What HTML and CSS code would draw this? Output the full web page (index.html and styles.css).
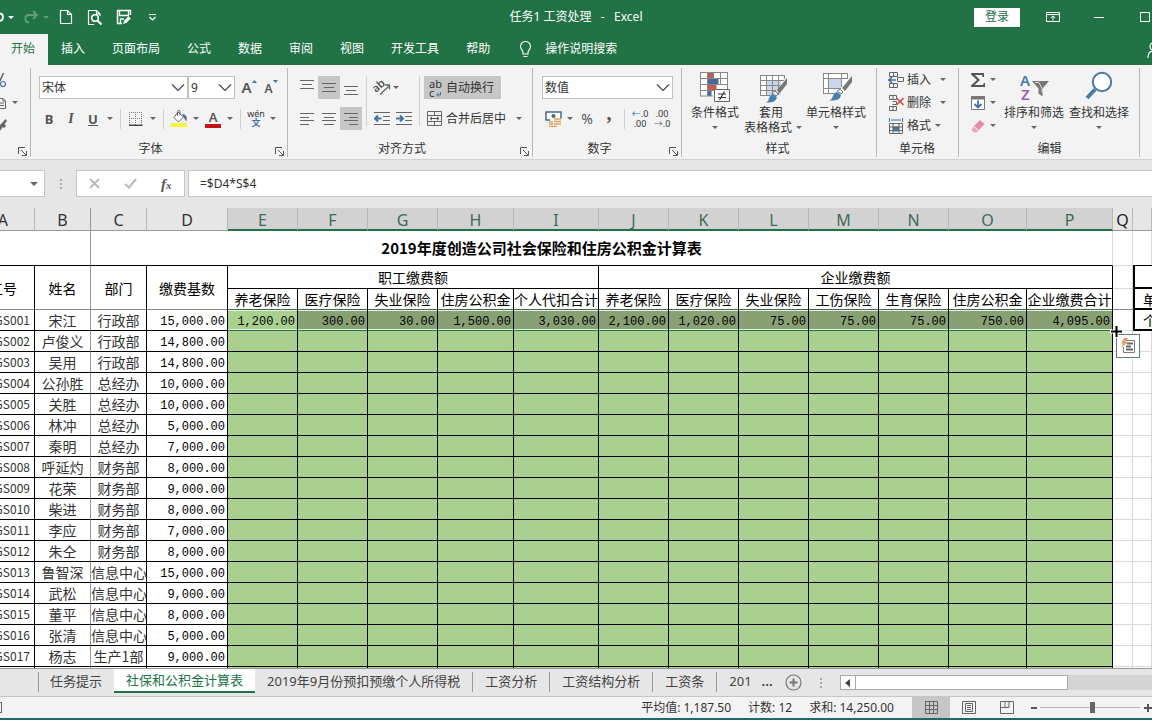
FILE: index.html
```html
<!DOCTYPE html>
<html lang="zh-CN">
<head>
<meta charset="utf-8">
<title>任务1 工资处理 - Excel</title>
<link rel="stylesheet" href="styles.css">
</head>
<body>
<header class="titlebar">
  <div class="quick">
    <button class="q-undo" aria-label="撤消"><svg width="4" height="16" viewBox="0 0 4 16"><path d="M0 4.500C4 5 4 11 0 12" fill="none" stroke="#fff" stroke-width="1.800"/></svg><i class="caret"></i></button>
    <button class="q-redo" aria-label="恢复"><svg width="16" height="16" viewBox="0 0 16 16" fill="none" stroke="#fff" stroke-width="1.800"><path d="M14 6H6.500C1 6 1 13 6 13.500M10 2l4 4-4 4"/></svg><i class="caret"></i></button>
    <button class="q-btn" aria-label="新建"><svg width="14" height="16" viewBox="0 0 14 16" fill="none" stroke="#fff" stroke-width="1.200"><path d="M1.500 1.500h7l4 4v9h-11zM8.500 1.500v4h4"/></svg></button>
    <button class="q-btn" aria-label="打印预览"><svg width="16" height="17" viewBox="0 0 16 17" fill="none" stroke="#fff" stroke-width="1.200"><path d="M7 15.500H1.500v-14h8l3.500 3.500v2M9.500 1.500V5h3"/><circle cx="8" cy="9" r="3.300" stroke-width="1.600"/><path d="M10.500 11.500l4 4" stroke-width="2.200"/></svg></button>
    <button class="q-btn" aria-label="保存"><svg width="16" height="16" viewBox="0 0 16 16" fill="none" stroke="#fff" stroke-width="1.400"><path d="M6 14.500H1.500v-13h13V6M3.500 2v4.500h9V2M4.500 14v-4H8"/><path d="M7.500 14.500l1-3 4-4 2 2-4 4z" fill="#fff" stroke-width=".6"/></svg></button>
    <button class="q-btn" aria-label="自定义快速访问工具栏"><svg width="9" height="9" viewBox="0 0 9 9" fill="none" stroke="#fff" stroke-width="1.200"><path d="M1 1.500h7M1.500 4l3 3 3-3"/></svg></button>
  </div>
  <h1 class="doc-title">任务1 工资处理&nbsp;&nbsp; -&nbsp;&nbsp; Excel</h1>
  <div class="win">
    <button class="signin">登录</button>
    <button class="win-btn" aria-label="功能区显示选项"><svg width="14" height="12" viewBox="0 0 14 12" fill="none" stroke="#fff"><path d="M.5 1.500h13v9H.5zM.5 3.500h13M7 9.500V5M4.800 7L7 4.800 9.200 7"/></svg></button>
    <button class="win-btn" aria-label="最小化"><svg width="10" height="10" viewBox="0 0 10 10" stroke="#fff"><path d="M0 5.500h10"/></svg></button>
    <button class="win-btn" aria-label="最大化"><svg width="10" height="10" viewBox="0 0 10 10" fill="none" stroke="#fff"><path d="M.5.5h9v9h-9z"/></svg></button>
  </div>
</header>
<nav class="tabs">
  <a href="#" class="tab tab-on">开始</a><a href="#" class="tab">插入</a><a href="#" class="tab">页面布局</a><a href="#" class="tab">公式</a><a href="#" class="tab">数据</a><a href="#" class="tab">审阅</a><a href="#" class="tab">视图</a><a href="#" class="tab">开发工具</a><a href="#" class="tab">帮助</a>
  <a href="#" class="tell"><svg width="13" height="17" viewBox="0 0 13 17" fill="none" stroke="#fff" stroke-width="1.100"><path d="M4 11.500C4 9 1.500 8.500 1.500 5.500a5 5 0 0 1 10 0C11.500 8.500 9 9 9 11.500v1.500H4zM4.500 15.500h4"/></svg>操作说明搜索</a>
  <button class="share" aria-label="共享"><svg width="14" height="18" viewBox="0 0 14 18" fill="none" stroke="#fff" stroke-width="1.200"><circle cx="7" cy="5.500" r="4"/><path d="M1 17c0-5 2.500-7 6-7s6 2 6 7"/></svg></button>
</nav>

<section class="ribbon">
  <div class="group g-clip">
    <div class="clip">
      <button class="tool" aria-label="剪切"><svg width="7" height="16" viewBox="0 0 7 16" fill="none"><path d="M3.500 1L0 9" stroke="#666" stroke-width="1.600"/><circle cx="3" cy="12" r="2.500" stroke="#4472a8" stroke-width="1.200"/></svg></button>
      <button class="tool" aria-label="复制"><svg width="7" height="14" viewBox="0 0 7 14" fill="none" stroke="#666"><path d="M0 2.500h3l2.500 2.500v7.500H0M0 7h4M0 9.500h4M3 2.500V5h2.500"/></svg><i class="caret"></i></button>
      <button class="tool" aria-label="格式刷"><svg width="7" height="14" viewBox="0 0 7 14"><path d="M5.500 0L7 2 4.500 5 6 7 4 9 2.500 8 0 12V6l2-2z" fill="#666"/></svg></button>
    </div>
    <div class="glabel"><button class="launch" aria-label="剪贴板设置"><svg width="9" height="9" viewBox="0 0 9 9" fill="none" stroke="#555"><path d="M.5 7V.5H7M3 3l5 5M8.500 4v4.500H4"/></svg></button></div>
  </div>

  <div class="group g-font">
    <div class="row">
      <label class="combo c-font"><select aria-label="字体"><option>宋体</option></select><svg width="14" height="9" viewBox="0 0 14 9" fill="none" stroke="#444" stroke-width="1.200"><path d="M1 1.500l6 6 6-6"/></svg></label>
      <label class="combo c-size"><select aria-label="字号"><option>9</option></select><svg width="14" height="9" viewBox="0 0 14 9" fill="none" stroke="#444" stroke-width="1.200"><path d="M1 1.500l6 6 6-6"/></svg></label>
      <button class="tool grow" aria-label="增大字号"><b class="big-a">A</b><svg width="5" height="3" viewBox="0 0 5 3"><path d="M0 3l2.500-3L5 3z" fill="#4472a8"/></svg></button>
      <button class="tool grow" aria-label="减小字号"><b class="small-a">A</b><svg width="5" height="3" viewBox="0 0 5 3"><path d="M0 0l2.500 3L5 0z" fill="#4472a8"/></svg></button>
    </div>
    <div class="row row-fmt">
      <button class="tool"><b>B</b></button><button class="tool"><b class="ital">I</b></button><button class="tool"><b class="under">U</b></button><button class="drop" aria-label="下划线样式"><i class="caret"></i></button>
      <i class="sep"></i>
      <button class="tool" aria-label="边框"><svg width="14" height="14" viewBox="0 0 14 14" fill="none" stroke="#777"><path d="M.5 0v13M6.500 0v13M12.500 0v13M0 .5h13M0 6.500h13" stroke-dasharray="1 1"/><path d="M0 13.300h13.500" stroke="#444" stroke-width="1.400"/></svg></button><button class="drop" aria-label="边框选项"><i class="caret"></i></button>
      <i class="sep"></i>
      <button class="tool" aria-label="填充颜色"><svg width="17" height="17" viewBox="0 0 17 17"><path d="M7 2l5.500 5L7.500 12 3 7.500z" fill="#fff" stroke="#666"/><path d="M6.500 6V1.500c0-1.500 2.500-1.500 2.500 0V5" fill="none" stroke="#666"/><path d="M11 4c4 0 5.500 3 4.500 7.500L13 8z" fill="#4f6f9b"/><path d="M0 13h16v4H0z" fill="#f5f53c"/></svg></button><button class="drop" aria-label="填充颜色选项"><i class="caret"></i></button>
      <button class="tool font-color" aria-label="字体颜色"><b>A</b><i></i></button><button class="drop" aria-label="字体颜色选项"><i class="caret"></i></button>
      <i class="sep"></i>
      <button class="tool pinyin" aria-label="拼音"><span>wén</span><b>文</b></button><button class="drop" aria-label="拼音选项"><i class="caret"></i></button>
    </div>
    <div class="glabel"><span>字体</span><button class="launch" aria-label="字体设置"><svg width="9" height="9" viewBox="0 0 9 9" fill="none" stroke="#555"><path d="M.5 7V.5H7M3 3l5 5M8.500 4v4.500H4"/></svg></button></div>
  </div>

  <div class="group g-align">
    <div class="cols">
      <div class="pad p3">
        <button class="tool" aria-label="顶端对齐"><svg width="14" height="15" viewBox="0 0 14 15" stroke="#666"><path d="M0 .5h14M2 4.500h10M0 8.500h14"/></svg></button>
        <button class="tool on" aria-label="垂直居中"><svg width="14" height="15" viewBox="0 0 14 15" stroke="#666"><path d="M0 3.500h14M2 7.500h10M0 11.500h14"/></svg></button>
        <button class="tool" aria-label="底端对齐"><svg width="14" height="15" viewBox="0 0 14 15" stroke="#666"><path d="M0 6.500h14M2 10.500h10M0 14.500h14"/></svg></button>
        <button class="tool" aria-label="左对齐"><svg width="14" height="12" viewBox="0 0 14 12" stroke="#666"><path d="M0 .5h14M0 4.500h9M0 7.500h14M0 11.500h9"/></svg></button>
        <button class="tool" aria-label="居中"><svg width="14" height="12" viewBox="0 0 14 12" stroke="#666"><path d="M0 .5h14M2 4.500h10M0 7.500h14M2 11.500h10"/></svg></button>
        <button class="tool on" aria-label="右对齐"><svg width="14" height="12" viewBox="0 0 14 12" stroke="#666"><path d="M0 .5h14M5 4.500h9M0 7.500h14M5 11.500h9"/></svg></button>
      </div>
      <i class="sep"></i>
      <div class="pad p2">
        <button class="tool" aria-label="方向"><svg width="18" height="17" viewBox="0 0 18 17"><text x="0" y="12" font-family="Noto Sans" font-size="11" font-weight="500" fill="#444" transform="rotate(-42 4 9)">ab</text><path d="M7 15.500L16 7M12 6h4.500v4.500" fill="none" stroke="#666" stroke-width="1.300"/></svg></button>
        <button class="drop left" aria-label="方向选项"><i class="caret"></i></button>
        <button class="tool" aria-label="减少缩进"><svg width="16" height="13" viewBox="0 0 16 13"><path d="M0 .5h16M9 4.500h7M9 8.500h7M0 12.500h16" stroke="#666"/><path d="M7.500 6.500H1.500M4 3.500l-3 3 3 3" fill="none" stroke="#4472a8" stroke-width="2"/></svg></button>
        <button class="tool" aria-label="增加缩进"><svg width="16" height="13" viewBox="0 0 16 13"><path d="M0 .5h16M9 4.500h7M9 8.500h7M0 12.500h16" stroke="#666"/><path d="M0 6.500h6M4 3.500l3 3-3 3" fill="none" stroke="#4472a8" stroke-width="2"/></svg></button>
      </div>
      <i class="sep"></i>
      <div class="stack">
        <button class="wide on"><span class="wrap-ic">ab<br>c<svg width="5" height="5" viewBox="0 0 5 5" fill="none" stroke="#4472a8"><path d="M4.500 0v3H1M2.500 1L.8 3l1.700 1.700"/></svg></span>自动换行</button>
        <button class="wide"><span class="ic22"><svg width="15" height="15" viewBox="0 0 15 15" fill="none" stroke="#666"><path d="M.5.500h14v14H.5zM.5 4.500h14M.5 10.500h14M7.500.5v4M7.500 10.500v4"/><path d="M3 7.500h9M5 5.800L3 7.500l2 1.700M10 5.800l2 1.700-2 1.700" stroke="#555"/></svg></span>合并后居中<i class="caret far"></i></button>
      </div>
    </div>
    <div class="glabel"><span>对齐方式</span><button class="launch" aria-label="对齐设置"><svg width="9" height="9" viewBox="0 0 9 9" fill="none" stroke="#555"><path d="M.5 7V.5H7M3 3l5 5M8.500 4v4.500H4"/></svg></button></div>
  </div>

  <div class="group g-num">
    <div class="row">
      <label class="combo c-num"><select aria-label="数字格式"><option>数值</option></select><svg width="14" height="9" viewBox="0 0 14 9" fill="none" stroke="#444" stroke-width="1.200"><path d="M1 1.500l6 6 6-6"/></svg></label>
    </div>
    <div class="row row-fmt">
      <button class="tool" aria-label="会计数字格式"><svg width="17" height="17" viewBox="0 0 17 17"><path d="M1 2h15v8H1z" fill="#fff" stroke="#456b8c" stroke-width="1.500"/><circle cx="8.500" cy="6" r="2" fill="#456b8c"/><path d="M5 8.500h12V17H5z" fill="#f3f3f3"/><path d="M9 9h7M9 11.500h7M9 14h7M4 12h4M4 14h4M4 16.300h8" stroke="#dfa35c" stroke-width="1.300"/></svg></button><button class="drop" aria-label="会计选项"><i class="caret"></i></button>
      <button class="tool pct">%</button><button class="tool comma">,</button>
      <i class="sep"></i>
      <button class="tool dec" aria-label="增加小数位数"><span><em>←</em>.0</span><span>.00</span></button><button class="tool dec" aria-label="减少小数位数"><span>.00</span><span><em>→</em>.0</span></button>
    </div>
    <div class="glabel"><span>数字</span><button class="launch" aria-label="数字设置"><svg width="9" height="9" viewBox="0 0 9 9" fill="none" stroke="#555"><path d="M.5 7V.5H7M3 3l5 5M8.500 4v4.500H4"/></svg></button></div>
  </div>

  <div class="group g-style">
    <div class="bigs">
      <button class="big b52"><svg width="32" height="32" viewBox="0 0 32 32"><path d="M1 1h28v24H1z" fill="#fff"/><path d="M8.500 1h6v6h-6zM8.500 13h9v6h-9z" fill="#c25b50"/><path d="M8.500 7h11v6h-11zM8.500 19h4v6h-4z" fill="#466a9c"/><path d="M1.500 1v24M8.500 1v24M14.500 1v6M21.500 1v12M28.500 1v18M1 1.500h28M1 7.500h28M1 13.500h28M1 19.500h14M1 25h13" stroke="#888" fill="none"/><path d="M15.500 18.500h15v12h-15z" fill="#fff" stroke="#666"/><path d="M19 23h8M19 26.500h8M25.500 20.500l-5 8.500" stroke="#333" stroke-width="1.200"/></svg><span>条件格式</span><i class="caret"></i></button>
      <button class="big b60"><svg width="32" height="32" viewBox="0 0 32 32"><path d="M5 4h22v20H5z" fill="#fff"/><path d="M11 9h15v15H11z" fill="#ccd6ea"/><path d="M5.500 4v20M11.500 4v20M17.500 4v20M23.500 4v20M5 4.500h24M5 9.500h24M5 14.500h20M5 19.500h16M5 24.500h10M29.500 4v4" stroke="#888" fill="none"/><path d="M32 7v6l-7 9-3-3z" fill="#777"/><path d="M20 20l3 3-2 2-4-3z" fill="#fff" stroke="#777"/><path d="M11 31.500c4-1 2-8 7-8.500l4 3c-1 5-6 6-11 5.500z" fill="#4a80b0"/></svg><span>套用</span><span class="line2">表格格式<i class="caret"></i></span></button>
      <button class="big b70"><svg width="32" height="32" viewBox="0 0 32 32"><path d="M3 2h24v20H3z" fill="#fff"/><path d="M9 8h12v9H9z" fill="#ccd6ea"/><path d="M3.500 2v20M8.500 2v20M21.500 2v14M27.500 2v5M3 2.500h25M3 7.500h25M3 17.500h18M3 22.500h12" stroke="#888" fill="none"/><path d="M32 5v6l-7 9-3-3z" fill="#777"/><path d="M20 18l3 3-2 2-4-3z" fill="#fff" stroke="#777"/><path d="M9 29.500c5-1 3-8 8-8.500l4 3c-1 5-6 6-12 5.500z" fill="#4a80b0"/></svg><span>单元格样式</span><i class="caret"></i></button>
    </div>
    <div class="glabel"><span>样式</span></div>
  </div>

  <div class="group g-cell">
    <div class="minis">
      <button class="mini"><svg width="16" height="16" viewBox="0 0 16 16" fill="none" stroke="#666"><path d="M1.500.5h8v4h-8zM5.500.5v4M1.500 11.500h8v4h-8zM5.500 11.500v4M9.500 5.500h6v4h-6z"/><path d="M8 8H1M4 5L1 8l3 3" stroke="#4472a8" stroke-width="1.600"/></svg>插入<i class="caret c12"></i></button>
      <button class="mini"><svg width="16" height="16" viewBox="0 0 16 16" fill="none" stroke="#666"><path d="M1.500.5h7v4h-7zM5 .5v4M1.500 11.500h7v4h-7zM5 11.500v4M4.500 6.500h4v3h-4"/><path d="M8.500 3l7 7M15.500 3l-7 7" stroke="#c8534d" stroke-width="1.700"/></svg>删除<i class="caret c12"></i></button>
      <button class="mini"><svg width="16" height="16" viewBox="0 0 16 16" fill="none" stroke="#666"><path d="M1.500 5.500h13v10h-13zM5 5.500v10M11 5.500v10M1.500 9h13M1.500 12.500h13"/><path d="M5.500 9h5v4h-5z" fill="#4472a8"/><path d="M1.500 0v4M14.500 0v4M3 2h10" stroke="#4472a8"/></svg>格式<i class="caret c6"></i></button>
    </div>
    <div class="glabel"><span>单元格</span></div>
  </div>

  <div class="group g-edit">
    <div class="edit">
      <div class="minis">
        <button class="mini" aria-label="自动求和"><svg width="16" height="16" viewBox="0 0 16 16"><path d="M1 1h13v4h-1.500l-.5-2H5l5 5-5.500 5H13l.8-2H15v4H1v-1.500L7 8 1 2.500z" fill="#555"/></svg><i class="caret c6"></i></button>
        <button class="mini" aria-label="填充"><svg width="16" height="16" viewBox="0 0 16 16" fill="none"><path d="M1.500 1.500h13v13h-13z" fill="#fff" stroke="#777"/><path d="M1 1h14v3.500H1z" fill="#777"/><path d="M8 5.500v7M4.500 9L8 12.500 11.500 9" stroke="#3f6fa5" stroke-width="1.800"/></svg><i class="caret c6"></i></button>
        <button class="mini" aria-label="清除"><svg width="16" height="16" viewBox="0 0 16 16"><path d="M10 2l4.500 4-5.500 6-5-4z" fill="#e38ba5"/><path d="M3.500 8.500l5 4-1.500 2H4L1.500 12z" fill="#eda9bb"/></svg><i class="caret c6"></i></button>
      </div>
      <button class="big b66"><svg width="32" height="32" viewBox="0 0 32 32"><text x="2" y="15" font-family="Noto Sans" font-weight="600" font-size="15" fill="#4a7ba6">A</text><text x="3" y="29" font-family="Noto Sans" font-weight="600" font-size="15" fill="#9a5fb0">Z</text><path d="M14 10h17l-6.500 7.500v8l-4-3v-5z" fill="#777"/><path d="M17 11.500h4l3 6v4" fill="none" stroke="#ddd"/></svg><span>排序和筛选</span><i class="caret"></i></button>
      <button class="big b64"><svg width="32" height="32" viewBox="0 0 32 32"><circle cx="19" cy="11" r="9.200" fill="#fff" stroke="#4a7ba6" stroke-width="2"/><path d="M12 18.500l-8 8.500" stroke="#4a7ba6" stroke-width="4"/></svg><span>查找和选择</span><i class="caret"></i></button>
    </div>
    <div class="glabel"><span>编辑</span></div>
  </div>
</section>

<section class="fbar">
  <label class="namebox"><select aria-label="名称框"><option></option></select><i class="caret"></i></label>
  <span class="dots"><i></i><i></i><i></i></span>
  <div class="fbtns">
    <button aria-label="取消"><svg width="11" height="11" viewBox="0 0 11 11" stroke="#b8b8b8" stroke-width="1.800"><path d="M1 1l9 9M10 1l-9 9"/></svg></button>
    <button aria-label="输入"><svg width="13" height="11" viewBox="0 0 13 11" fill="none" stroke="#bbb" stroke-width="2.200"><path d="M1 6l4 3.500L12 1"/></svg></button>
    <button class="fx" aria-label="插入函数">f<small>x</small></button>
  </div>
  <input class="formula" aria-label="编辑栏" value="=$D4*S$4">
</section>

<main class="sheet">
  <table class="grid">
    <colgroup><col class="w35"><col class="w56"><col class="w56"><col class="w81"><col class="w70"><col class="w70"><col class="w70"><col class="w76"><col class="w85"><col class="w70"><col class="w70"><col class="w70"><col class="w70"><col class="w70"><col class="w78"><col class="w86"><col class="w20"><col></colgroup>
    <thead><tr><th class="col-a">A</th><th class="fz">B</th><th>C</th><th>D</th><th class="hot">E</th><th class="hot">F</th><th class="hot">G</th><th class="hot">H</th><th class="hot">I</th><th class="hot">J</th><th class="hot">K</th><th class="hot">L</th><th class="hot">M</th><th class="hot">N</th><th class="hot">O</th><th class="hot">P</th><th class="dark">Q</th><th></th></tr></thead>
    <tbody id="rows">
      <tr class="r-title"><td colspan="2" class="fz"></td><td colspan="14" class="title">2019年度创造公司社会保险和住房公积金计算表</td><td class="plain"></td><td class="plain"></td></tr>
      <tr class="r-group"><td rowspan="2" class="cut low"><span class="cut-in">工号</span></td><td rowspan="2" class="fz low">姓名</td><td rowspan="2" class="low">部门</td><td rowspan="2" class="low">缴费基数</td><td colspan="5">职工缴费额</td><td colspan="7">企业缴费额</td><td class="plain"></td><td class="side side-top"></td></tr>
      <tr class="r-sub"><td>养老保险</td><td>医疗保险</td><td>失业保险</td><td>住房公积金</td><td>个人代扣合计</td><td>养老保险</td><td>医疗保险</td><td>失业保险</td><td>工伤保险</td><td>生育保险</td><td>住房公积金</td><td>企业缴费合计</td><td class="plain low"></td><td class="side">单</td></tr>
    </tbody>
  </table>
</main>

<nav class="sheets">
  <a href="#" class="sh first">任务提示</a><a href="#" class="sh sh-on">社保和公积金计算表</a><a href="#" class="sh">2019年9月份预扣预缴个人所得税</a><a href="#" class="sh">工资分析</a><a href="#" class="sh">工资结构分析</a><a href="#" class="sh">工资条</a><a href="#" class="sh more">201 <b>...</b></a>
  <button class="add" aria-label="新工作表"><svg width="17" height="17" viewBox="0 0 17 17" fill="none" stroke="#777"><circle cx="8.500" cy="8.500" r="7.500" stroke-width="1.200"/><path d="M8.500 4.500v8M4.500 8.500h8" stroke-width="2"/></svg></button>
  <span class="dots"><i></i><i></i><i></i></span>
  <div class="hscroll"><button aria-label="向左滚动"><svg width="5" height="8" viewBox="0 0 5 8"><path d="M5 0v8L0 4z" fill="#444"/></svg></button><div class="thumb"></div></div>
</nav>

<footer class="status">
  <span class="rec"></span>
  <span class="stat">平均值: 1,187.50</span><span class="stat">计数: 12</span><span class="stat last">求和: 14,250.00</span>
  <button class="view on" aria-label="普通"><svg width="13" height="13" viewBox="0 0 13 13" fill="none" stroke="#666"><path d="M.5.500h12v12H.5zM4.500.5v12M8.500.5v12M.5 4.500h12M.5 8.500h12"/></svg></button>
  <button class="view" aria-label="页面布局"><svg width="14" height="13" viewBox="0 0 14 13" fill="none" stroke="#666"><path d="M.5.500h13v12H.5zM3.500 2.500h7v8h-7zM5 4.500h4M5 6.500h4M5 8.500h4"/></svg></button>
  <button class="view" aria-label="分页预览"><svg width="14" height="13" viewBox="0 0 14 13" fill="none" stroke="#666"><path d="M.5.500h13v12H.5zM5 .5v6M9 .5v6M.5 6.500H9"/></svg></button>
  <button class="zoom" aria-label="缩小"><svg width="6" height="6" viewBox="0 0 6 6" stroke="#555" stroke-width="2"><path d="M0 3h6"/></svg></button>
  <input type="range" class="slider" aria-label="显示比例" min="0" max="100" value="53">
  <button class="zoom plus" aria-label="放大"><svg width="8" height="8" viewBox="0 0 8 8" stroke="#555" stroke-width="2"><path d="M0 4h8M4 0v8"/></svg></button>
</footer>
<script src="rows.js"></script>
</body>
</html>
```

FILE: styles.css
```css
* { box-sizing: border-box; }
body {
  margin: 0; height: 100vh; overflow: hidden; display: flex; flex-direction: column;
  font: 12px/16px "Noto Sans", "Noto Sans CJK SC", sans-serif; color: #333; background: #e6e6e6;
  border-bottom: 2px solid #20696a;
}
button { font: inherit; color: inherit; background: none; border: 0; padding: 0; display: flex; align-items: center; justify-content: center; white-space: nowrap; }
select, input { font: inherit; color: inherit; margin: 0; }
a { color: inherit; text-decoration: none; }
svg { display: block; flex: none; }
.caret { flex: none; width: 0; height: 0; border: 3px solid transparent; border-top-color: #666; border-bottom: 0; }

/* title bar */
.titlebar { display: grid; grid-template-columns: minmax(0, 1fr) auto minmax(0, 1fr); align-items: center; height: 34px; flex: none; background: #217346; color: #fff; }
.quick { display: flex; align-items: center; }
.quick .caret { border-top-color: #fff; }
.q-undo { gap: 4px; width: 23px; justify-content: flex-start; }
.q-redo { gap: 4px; width: 28px; opacity: .3; justify-content: flex-start; }
.q-btn { width: 29px; }
.doc-title { margin: 0; font-size: 12px; font-weight: 400; }
.win { display: flex; justify-content: flex-end; align-items: center; margin-right: -16px; }
.signin { width: 46px; height: 19px; margin-right: 10px; background: #fff; color: #217346; }
.win-btn { width: 46px; height: 30px; }

/* ribbon tabs */
.tabs { display: flex; height: 31px; flex: none; background: #217346; color: #fff; overflow: hidden; }
.tab { padding: 7px 14px 0 13px; }
.tab-on { padding: 7px 13px 0 11px; background: #f3f3f3; color: #217346; }
.tell { display: flex; gap: 13px; padding: 0 0 1px 15px; align-items: center; }
.share { margin: 0 -9px 0 auto; }

/* ribbon */
.ribbon { display: flex; flex: none; height: 95px; background: #f3f3f3; border-bottom: 1px solid #d2d2d2; overflow: hidden; }
.group { display: flex; flex-direction: column; flex: none; height: 89px; margin-top: 3px; padding-top: 8px; border-right: 1px solid #b8b8b8; }
.g-clip { width: 31px; }
.g-font { width: 257px; padding-left: 7px; }
.g-align { width: 245px; padding-left: 8px; }
.g-num { width: 149px; padding-left: 9px; }
.g-style { width: 195px; padding-left: 7px; }
.g-cell { width: 82px; padding-left: 11px; }
.g-edit { width: 181px; padding-left: 11px; }
.glabel { display: grid; grid-template: 18px / 1fr; align-items: center; margin-top: auto; }
.glabel > * { grid-area: 1 / 1; }
.glabel span { text-align: center; padding-top: 2px; }
.g-style span, .g-edit span { padding-right: 0; }
.g-font .glabel span, .g-align .glabel span, .g-num .glabel span { padding-right: 24px; }
.g-style .glabel, .g-edit .glabel { padding-right: 10px; }
.g-cell .glabel { padding-right: 12px; }
.launch { justify-self: end; padding: 6px 3px 0 0; }
.row { display: flex; align-items: center; height: 23px; flex: none; }
.row-fmt { margin-top: 8px; }
.tool { width: 22px; height: 23px; flex: none; }
.tool b { font-size: 13px; line-height: 14px; color: #555; }
.tool .ital { font-family: "Liberation Serif", serif; font-size: 14px; font-style: italic; }
.tool .under { text-decoration: underline; }
.on { background: #c6c6c6; }
.drop { width: 12px; height: 23px; }
.drop.left { width: 22px; justify-content: flex-start; }
.sep { width: 9px; height: 20px; flex: none; background: linear-gradient(#d0d0d0, #d0d0d0) center / 1px 100% no-repeat; }
.combo { display: grid; align-items: center; height: 23px; }
.combo > * { grid-area: 1 / 1; }
.combo select { appearance: none; width: 100%; height: 23px; border: 1px solid #c0c0c0; border-radius: 0; background: #fff; padding: 0 2px; }
.combo svg { justify-self: end; margin-right: 3px; pointer-events: none; }
.c-font { width: 149px; margin-left: 1px; }
.c-size { width: 47px; margin-right: 3px; }
.c-num { width: 131px; }
.grow { align-items: flex-start; }
.tool .big-a { font-size: 15px; line-height: 23px; font-weight: 600; }
.tool .small-a { font-size: 12px; line-height: 25px; font-weight: 600; }
.grow svg { margin-top: 4px; }
.font-color { flex-direction: column; padding-top: 1px; }
.font-color b { line-height: 13px; font-weight: 600; }
.font-color i { width: 16px; height: 4px; background: #c6131b; }
.pinyin { flex-direction: column; }
.pinyin span { font-size: 9px; line-height: 9px; }
.tool.pinyin b { font-size: 9px; line-height: 10px; color: #4472a8; }
.pct { font-size: 14px; color: #555; }
.comma { font: bold 20px/10px "Liberation Serif", serif; color: #555; padding-bottom: 11px; }
.dec { flex-direction: column; font-size: 9px; line-height: 10px; }
.dec em { font-style: normal; color: #4472a8; }
.cols, .bigs, .edit { display: flex; }
.cols .sep { height: 50px; }
.pad { display: grid; row-gap: 8px; }
.p3 { grid-template-columns: repeat(3, 22px); }
.p2 { grid-template-columns: repeat(2, 22px); }
.stack { display: flex; flex-direction: column; gap: 8px; align-items: flex-start; }
.wide { height: 23px; padding-right: 7px; }
.wide .far { margin-left: 10px; }
.wrap-ic { width: 22px; font-size: 11px; line-height: 9px; text-align: left; padding-left: 5px; }
.wrap-ic svg { display: inline-block; margin-left: 2px; }
.ic22 { width: 22px; padding-left: 3px; }
.clip { display: flex; flex-direction: column; margin-top: -8px; }
.clip .tool { justify-content: flex-start; gap: 5px; }
.bigs, .edit > .big { margin-top: -5px; }
.big { flex-direction: column; justify-content: flex-start; line-height: 15px; }
.big svg { margin-bottom: 2px; }
.big > .caret { margin-top: 6px; }
.line2 { display: flex; align-items: center; gap: 4px; padding-left: 4px; }
.b52 { width: 52px; }
.b60 { width: 60px; }
.b70 { width: 70px; }
.b66 { width: 66px; }
.b64 { width: 64px; }
.minis { display: flex; flex-direction: column; align-items: flex-start; margin-top: -8px; }
.mini { height: 23px; gap: 3px; }
.c12 { margin-left: 6px; }
.c6 { margin-left: 1px; }
.edit .minis { width: 31px; }

/* formula bar */
.fbar { display: flex; flex: none; height: 48px; padding: 10px 0 11px; background: #e6e6e6; }
.namebox { display: grid; width: 45px; align-items: center; }
.namebox > * { grid-area: 1 / 1; }
.namebox select { appearance: none; width: 100%; height: 27px; background: #fff; border: 1px solid #c6c6c6; border-left: 0; border-radius: 0; }
.namebox .caret { justify-self: end; margin-right: 7px; border-width: 4px 4px 0; }
.dots { display: flex; flex-direction: column; gap: 2px; align-items: center; justify-content: center; width: 31px; }
.dots i { width: 2px; height: 2px; background: #aaa; }
.fbtns { display: flex; width: 109px; background: #fff; border: 1px solid #c6c6c6; }
.fbtns button { width: 36px; }
.fbtns .fx { font: italic bold 15px/16px "Liberation Serif", serif; color: #555; }
.fx small { font-size: 11px; padding-top: 3px; }
.formula { flex: 1; min-width: 0; margin-left: 3px; padding: 0 11px; border: 1px solid #c6c6c6; border-right: 0; background: #fff; }

/* worksheet */
.sheet { flex: 1; min-height: 0; overflow: hidden; background: #fff; }
.grid { width: 100%; table-layout: fixed; border-collapse: separate; border-spacing: 0; font: 14px/18px "Noto Sans CJK SC", sans-serif; color: #000; }
.grid td, .grid th { padding: 0; border: 0 solid #000; border-width: 0 1px 1px 0; text-align: center; white-space: nowrap; }
.w20 { width: 20px; } .w35 { width: 35px; } .w56 { width: 56px; } .w70 { width: 70px; } .w76 { width: 76px; }
.w78 { width: 78px; } .w81 { width: 81px; } .w85 { width: 85px; } .w86 { width: 86px; }
.grid th { height: 22px; padding-top: 2px; vertical-align: top; font: 16px/20px "Noto Sans", sans-serif; color: #333; background: #e6e6e6; border-color: #b8b8b8; border-bottom-color: #999; }
.grid .col-a { padding-right: 27px; direction: rtl; }
.grid .hot { line-height: 18px; padding-top: 3px; background: #d2d2d2; color: #3f6a56; border-bottom: 2px solid #217346; }
.grid .dark { color: #222; }
.grid .fz { border-right-color: #999; }
.r-title td { height: 35px; }
.grid .title { font-size: 15px; font-weight: 700; padding-right: 120px; border-right-color: #d8d8d8; }
.r-group td { height: 23px; line-height: 16px; }
.r-sub td { height: 21px; line-height: 16px; border-bottom-color: #3f6a56; }
.grid .plain { border-color: #d8d8d8; }
.grid .low { border-bottom-color: #888; }
.grid .side { border-left: 2px solid #000; border-right: 0; border-bottom: 2px solid #000; text-align: left; padding-left: 8px; overflow: hidden; }
.grid .side-top { box-shadow: 0 -1px #000; }
.r-data td { height: 21px; line-height: 16px; }
.cut-in { display: flex; justify-content: flex-end; width: 30px; overflow: hidden; }
.r-data .cut-in { font-size: 12px; }
.low .cut-in { width: 17px; }
.r-data .text { color: #333; }
.grid .num { font-family: "Liberation Mono", monospace; font-size: 12px; text-align: right; padding: 3px 2px 0 0; }
.grid .fill { background: #a9d08e; }
.grid .sel { background: #87a174; border-bottom-color: #217346; box-shadow: inset 0 1px #e8f2e2, inset 0 -1px #e8f2e2; }
.grid .sel.active { background: #a9d08e; }
.anchor { position: relative; }
.cross { position: absolute; left: -3px; top: 15px; z-index: 2; }
.quick-fix { position: absolute; left: 3px; top: 24px; width: 24px; height: 24px; z-index: 1; background: #fff; border: 1px solid #5f7f70; }

/* sheet tabs */
.sheets { display: flex; flex: none; height: 29px; padding-left: 38px; background: #e6e6e6; border-top: 1px solid #999; border-bottom: 1px solid #c6c6c6; font-size: 13px; color: #444; }
.sh { display: flex; align-items: center; flex: none; height: 24px; padding: 0 13px 1px 12px; background: linear-gradient(#999, #999) right 3px / 1px 20px no-repeat; }
.sh.first { padding: 0 12px 1px; background: linear-gradient(#999, #999) left 3px / 1px 20px no-repeat; }
.sh-on { padding: 0 12px; background: #fff; color: #217346; border-bottom: 2px solid #217346; }
.sh.more { gap: 10px; background: none; padding-right: 0; }
.add { margin-left: 12px; }
.sheets .dots { width: 38px; }
.hscroll { display: flex; flex: 1; height: 15px; margin-top: 6px; background: #d4d4d4; }
.hscroll button { width: 16px; background: #fff; border: 1px solid #aaa; }
.thumb { width: 68%; background: #fff; border: 1px solid #aaa; border-left: 0; }

/* status bar */
.status { display: flex; align-items: center; flex: none; height: 21px; background: #f3f3f3; }
.rec { width: 2px; height: 11px; border: 1px solid #666; border-left: 0; margin-right: auto; }
.stat { margin-right: 17px; }
.stat.last { margin-right: 18px; }
.view { width: 38px; height: 21px; }
.zoom { width: 12px; height: 20px; margin-left: 2px; }
.slider { appearance: none; width: 100px; height: 20px; background: linear-gradient(#b5b5b5, #b5b5b5) center / 100% 1px no-repeat; }
.slider::-webkit-slider-thumb { appearance: none; width: 5px; height: 11px; background: #666; }
.plus { margin: 0 -2px 0 2px; }
```

FILE: rows.js
```
const staff = [
  ["GS001", "宋江", "行政部", "15,000.00"],
  ["GS002", "卢俊义", "行政部", "14,800.00"],
  ["GS003", "吴用", "行政部", "14,800.00"],
  ["GS004", "公孙胜", "总经办", "10,000.00"],
  ["GS005", "关胜", "总经办", "10,000.00"],
  ["GS006", "林冲", "总经办", "5,000.00"],
  ["GS007", "秦明", "总经办", "7,000.00"],
  ["GS008", "呼延灼", "财务部", "8,000.00"],
  ["GS009", "花荣", "财务部", "9,000.00"],
  ["GS010", "柴进", "财务部", "8,000.00"],
  ["GS011", "李应", "财务部", "7,000.00"],
  ["GS012", "朱仝", "财务部", "8,000.00"],
  ["GS013", "鲁智深", "信息中心", "15,000.00"],
  ["GS014", "武松", "信息中心", "9,000.00"],
  ["GS015", "董平", "信息中心", "8,000.00"],
  ["GS016", "张清", "信息中心", "5,000.00"],
  ["GS017", "杨志", "生产1部", "9,000.00"],
  ["", "", "", ""]
];
const first = ["1,200.00", "300.00", "30.00", "1,500.00", "3,030.00", "2,100.00", "1,020.00", "75.00", "75.00", "75.00", "750.00", "4,095.00"];

const overlay = `<svg class="cross" width="13" height="13" viewBox="0 0 13 13"><path d="M6.500 0v13M0 6.500h13" stroke="#fff" stroke-width="4"/><path d="M6.500 1v11M1 6.500h11" stroke="#000" stroke-width="2"/></svg>
<button class="quick-fix" aria-label="快速分析"><svg width="16" height="16" viewBox="0 0 16 16"><path d="M5.500 2.500h9v12h-11V9" fill="#fff" stroke="#777"/><path d="M7 5.500h6M6 8.500h5M6 11.500h7" stroke="#666" stroke-width="1.800"/><path d="M4 0h4L5.500 4H8L1 10l2-4.500H1z" fill="#e0a070"/></svg></button>`;

document.getElementById("rows").insertAdjacentHTML("beforeend", staff.map(([id, name, dept, base], r) => {
  const cells = first.map((v, c) => r === 0
    ? `<td class="num sel${c === 0 ? " active" : ""}">${v}</td>`
    : `<td class="fill"></td>`).join("");
  const tail = r === 0
    ? `<td class="plain anchor">${overlay}</td><td class="side">个</td>`
    : `<td class="plain"></td><td class="plain"></td>`;
  return `<tr class="r-data"><td class="text"><span class="cut-in">${id}</span></td><td class="text fz">${name}</td><td class="text">${dept}</td><td class="num">${base}</td>${cells}${tail}</tr>`;
}).join(""));
```
